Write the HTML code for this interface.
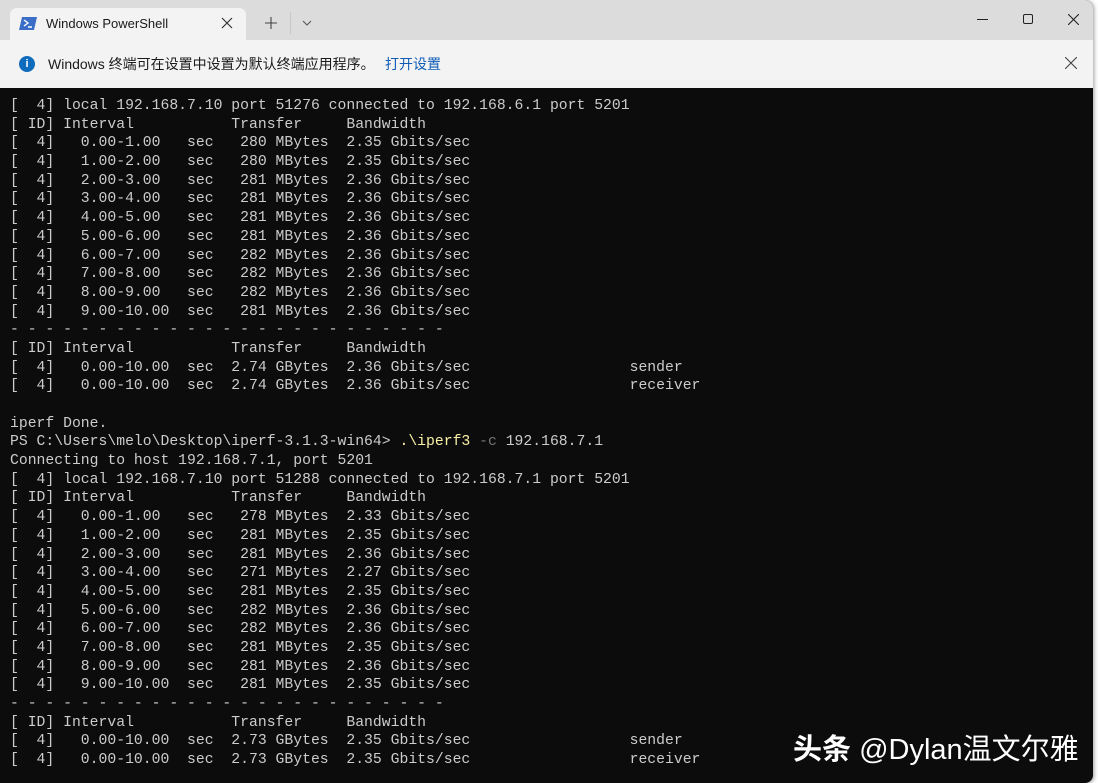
<!DOCTYPE html>
<html><head><meta charset="utf-8"><style>
*{margin:0;padding:0;box-sizing:border-box}
body{width:1098px;height:783px;background:#fff;overflow:hidden;position:relative;font-family:"Liberation Sans","Noto Sans CJK SC",sans-serif}
.win{position:absolute;left:0;top:0;width:1093px;height:783px;background:#0c0c0c;border-radius:0 8px 8px 0;overflow:hidden;box-shadow:1px 1px 4px rgba(0,0,0,.4)}
.title{position:absolute;left:0;top:0;width:100%;height:40px;background:#dcdcdc}
.tab{position:absolute;left:10px;top:8px;width:236px;height:32px;background:#f3f3f3;border-radius:7px 7px 0 0}
.tab .t{position:absolute;left:36px;top:8px;font-size:13px;color:#1a1a1a}
.info{position:absolute;left:0;top:40px;width:100%;height:48px;background:#f3f3f3}
.info .m{position:absolute;left:48px;top:14px;font-size:14px;color:#1a1a1a}
.info .l{position:absolute;left:385px;top:14px;font-size:14px;color:#0f5cb5}
.term{position:absolute;left:10px;top:97px;font-family:"Liberation Mono",monospace;font-size:14.75px;line-height:18.69px;color:#cccccc;white-space:pre}
.y{color:#f9f1a5}.g{color:#767676}
.wm{position:absolute;left:793px;top:726px;font-size:29px;color:#fff;white-space:nowrap}
</style></head><body>
<div class="win">
<div class="title">
 <div class="tab">
  <svg style="position:absolute;left:9px;top:8px" width="18" height="15"><path d="M3 1h15l-3 13H0z" fill="#3b6fc7"/><path d="M5 4l4 3-4 3M9 11h4" stroke="#fff" stroke-width="1.4" fill="none"/></svg>
  <span class="t">Windows PowerShell</span>
  <svg style="position:absolute;left:211px;top:9px" width="12" height="12"><path d="M1 1l10 10M11 1L1 11" stroke="#333" stroke-width="1.2"/></svg>
 </div>
 <svg style="position:absolute;left:265px;top:17px" width="12" height="12"><path d="M6 0v12M0 6h12" stroke="#444" stroke-width="1.1"/></svg>
 <div style="position:absolute;left:290px;top:12px;width:1px;height:22px;background:#c8c8c8"></div>
 <svg style="position:absolute;left:302px;top:20px" width="10" height="6"><path d="M1 1l4 4 4-4" stroke="#555" fill="none"/></svg>
 <div style="position:absolute;left:977px;top:19px;width:11px;height:1px;background:#222"></div>
 <div style="position:absolute;left:1023px;top:14px;width:10px;height:10px;border:1px solid #222;border-radius:2px"></div>
 <svg style="position:absolute;left:1068px;top:14px" width="11" height="11"><path d="M0 0l11 11M11 0L0 11" stroke="#222" stroke-width="1.1"/></svg>
</div>
<div class="info">
 <div style="position:absolute;left:19px;top:16px;width:16px;height:16px;border-radius:50%;background:#0f6cbd;color:#fff;font-size:11px;font-weight:bold;text-align:center;line-height:16px">i</div>
 <span class="m">Windows 终端可在设置中设置为默认终端应用程序。</span>
 <span class="l">打开设置</span>
 <svg style="position:absolute;left:1065px;top:17px" width="12" height="12"><path d="M0 0l12 12M12 0L0 12" stroke="#444" stroke-width="1.1"/></svg>
</div>
<div class="term">[  4] local 192.168.7.10 port 51276 connected to 192.168.6.1 port 5201
[ ID] Interval           Transfer     Bandwidth
[  4]   0.00-1.00   sec   280 MBytes  2.35 Gbits/sec
[  4]   1.00-2.00   sec   280 MBytes  2.35 Gbits/sec
[  4]   2.00-3.00   sec   281 MBytes  2.36 Gbits/sec
[  4]   3.00-4.00   sec   281 MBytes  2.36 Gbits/sec
[  4]   4.00-5.00   sec   281 MBytes  2.36 Gbits/sec
[  4]   5.00-6.00   sec   281 MBytes  2.36 Gbits/sec
[  4]   6.00-7.00   sec   282 MBytes  2.36 Gbits/sec
[  4]   7.00-8.00   sec   282 MBytes  2.36 Gbits/sec
[  4]   8.00-9.00   sec   282 MBytes  2.36 Gbits/sec
[  4]   9.00-10.00  sec   281 MBytes  2.36 Gbits/sec
- - - - - - - - - - - - - - - - - - - - - - - - -
[ ID] Interval           Transfer     Bandwidth
[  4]   0.00-10.00  sec  2.74 GBytes  2.36 Gbits/sec                  sender
[  4]   0.00-10.00  sec  2.74 GBytes  2.36 Gbits/sec                  receiver

iperf Done.
PS C:\Users\melo\Desktop\iperf-3.1.3-win64> <span class="y">.\iperf3</span> <span class="g">-c</span> 192.168.7.1
Connecting to host 192.168.7.1, port 5201
[  4] local 192.168.7.10 port 51288 connected to 192.168.7.1 port 5201
[ ID] Interval           Transfer     Bandwidth
[  4]   0.00-1.00   sec   278 MBytes  2.33 Gbits/sec
[  4]   1.00-2.00   sec   281 MBytes  2.35 Gbits/sec
[  4]   2.00-3.00   sec   281 MBytes  2.36 Gbits/sec
[  4]   3.00-4.00   sec   271 MBytes  2.27 Gbits/sec
[  4]   4.00-5.00   sec   281 MBytes  2.35 Gbits/sec
[  4]   5.00-6.00   sec   282 MBytes  2.36 Gbits/sec
[  4]   6.00-7.00   sec   282 MBytes  2.36 Gbits/sec
[  4]   7.00-8.00   sec   281 MBytes  2.35 Gbits/sec
[  4]   8.00-9.00   sec   281 MBytes  2.36 Gbits/sec
[  4]   9.00-10.00  sec   281 MBytes  2.35 Gbits/sec
- - - - - - - - - - - - - - - - - - - - - - - - -
[ ID] Interval           Transfer     Bandwidth
[  4]   0.00-10.00  sec  2.73 GBytes  2.35 Gbits/sec                  sender
[  4]   0.00-10.00  sec  2.73 GBytes  2.35 Gbits/sec                  receiver</div>
<div class="wm"><b>头条</b> @Dylan温文尔雅</div>
</div>
</body></html>
